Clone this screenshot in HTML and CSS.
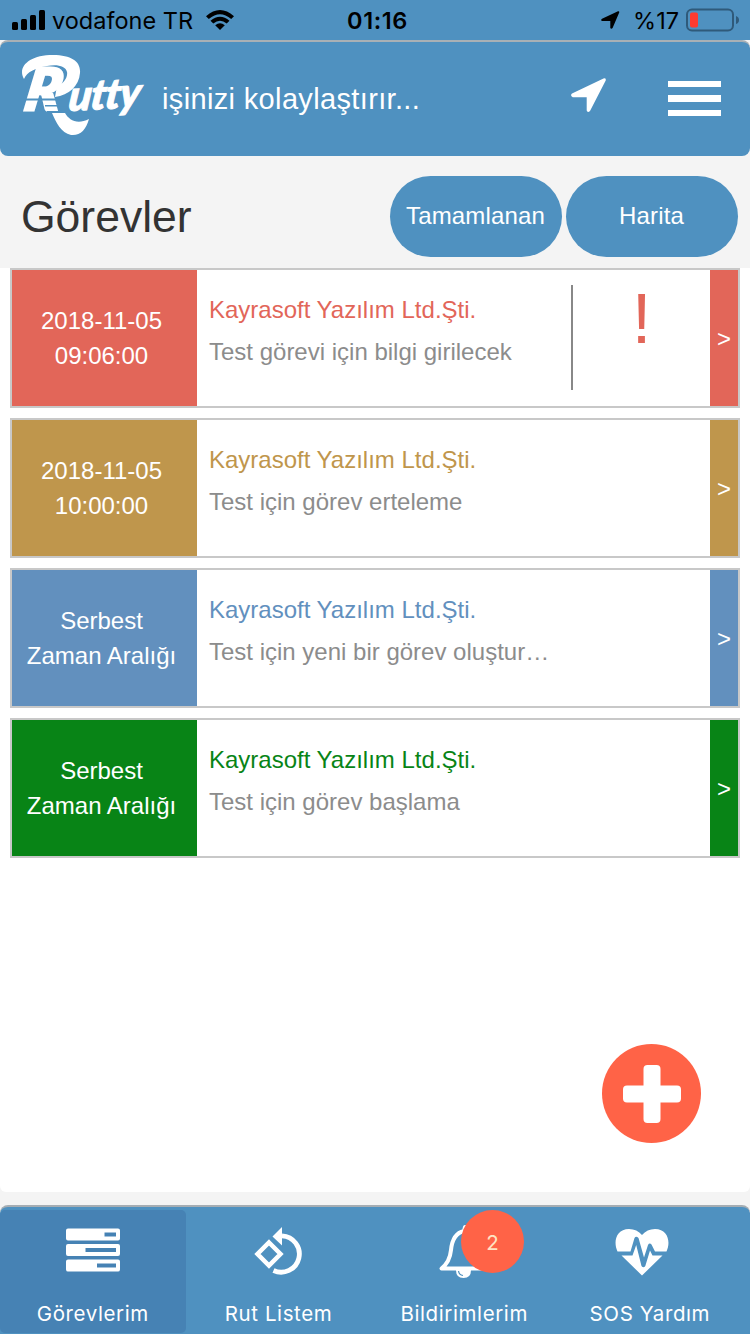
FILE: index.html
```html
<!DOCTYPE html>
<html lang="tr">
<head>
<meta charset="UTF-8">
<meta name="viewport" content="width=device-width, initial-scale=1.0">
<title>Rutty - Görevler</title>
<link rel="stylesheet" href="styles.css">
</head>
<body>

<div class="status">
    <div class="status-left">
        <svg width="34" height="22" viewBox="0 0 34 22">
            <rect x="0" y="13" width="6" height="8" rx="1.5"/>
            <rect x="9" y="10" width="6" height="11" rx="1.5"/>
            <rect x="18" y="6" width="6" height="15" rx="1.5"/>
            <rect x="27" y="1" width="6" height="20" rx="1.5"/>
        </svg>
        <span class="carrier">vodafone TR</span>
        <svg width="28" height="20" viewBox="0 0 28 20">
            <path d="M0 6.200Q14 -6 28 6.200L25.200 9Q14 -.5 2.800 9Z"/>
            <path d="M4.500 10.700Q14 2.700 23.500 10.700L20.700 13.500Q14 8 7.300 13.500Z"/>
            <path d="M9.200 15.300Q14 11.300 18.800 15.300L14 20Z"/>
        </svg>
    </div>
    <div class="clock">01:16</div>
    <div class="status-right">
        <svg width="19" height="18" viewBox="0 0 19 18">
            <path d="M1 7.800L17 .3Q18.600 0 18.200 1.400L11.600 17Q10.200 18.500 9.300 17V10H1Q-.8 9.200 1 7.800Z"/>
        </svg>
        <span class="percent">%17</span>
        <svg width="53" height="24" viewBox="0 0 53 24">
            <rect x="1" y="1.500" width="46" height="21" rx="5" fill="none" stroke="#2f5a7a" stroke-width="2"/>
            <rect x="4" y="4.500" width="8" height="15" rx="2" fill="#ff3b30"/>
            <path d="M50 8Q53 9 53 12T50 16Z" fill="#2f5a7a"/>
        </svg>
    </div>
</div>

<div class="header">
    <div class="logo">
        <span class="logo-r">R</span><span class="logo-rest">utty</span>
        <svg class="swash" width="124" height="84" viewBox="0 0 124 84">
            <path d="M3 24C-4 12 8 0 32 0C51 0 60 7 59 18C58 31 48 40 34 42L36 31C43 29 47 22 46 17C45 11 36 9 26 11C14 13 6 17 3 24Z"/>
            <path d="M31 58H44C48 65 56 70 68 64C65 75 59 81 50 80C40 78 35 67 31 58Z"/>
            <path class="stripe" d="M4 43.500H42V45.500H4ZM24 50H46V51.500H24ZM26 56H48V57.500H26Z"/>
        </svg>
    </div>
    <div class="slogan">işinizi kolaylaştırır...</div>
    <svg class="locate" width="35" height="35" viewBox="0 0 35 35">
        <path d="M1 15.500L32.500 .4Q35.400 0 34.700 2.500L19 33Q16.500 35 15.700 32.500V19.200H1.800Q-1.200 17.500 1 15.500Z"/>
    </svg>
    <div class="menu">
        <span></span>
        <span></span>
        <span></span>
    </div>
</div>

<div class="title">
    <h1>Görevler</h1>
    <button type="button">Tamamlanan</button>
    <button type="button">Harita</button>
</div>

<div class="list">
    <div class="task red">
        <div class="time">2018-11-05<br>09:06:00</div>
        <div class="info">
            <div class="firm">Kayrasoft Yazılım Ltd.Şti.</div>
            <div class="desc">Test görevi için bilgi girilecek</div>
        </div>
        <div class="alert"><span>!</span></div>
        <div class="go">&gt;</div>
    </div>
    <div class="task gold">
        <div class="time">2018-11-05<br>10:00:00</div>
        <div class="info">
            <div class="firm">Kayrasoft Yazılım Ltd.Şti.</div>
            <div class="desc">Test için görev erteleme</div>
        </div>
        <div class="go">&gt;</div>
    </div>
    <div class="task blue">
        <div class="time">Serbest<br>Zaman Aralığı</div>
        <div class="info">
            <div class="firm">Kayrasoft Yazılım Ltd.Şti.</div>
            <div class="desc">Test için yeni bir görev oluştur…</div>
        </div>
        <div class="go">&gt;</div>
    </div>
    <div class="task green">
        <div class="time">Serbest<br>Zaman Aralığı</div>
        <div class="info">
            <div class="firm">Kayrasoft Yazılım Ltd.Şti.</div>
            <div class="desc">Test için görev başlama</div>
        </div>
        <div class="go">&gt;</div>
    </div>
    <button class="add" type="button">
        <svg width="58" height="58" viewBox="0 0 58 58">
            <rect x="20.500" y="0" width="17" height="58" rx="4"/>
            <rect x="0" y="20.500" width="58" height="17" rx="4"/>
        </svg>
    </button>
</div>

<div class="nav">
    <div class="tab active">
        <svg width="54" height="54" viewBox="0 0 54 54">
            <path fill-rule="evenodd" d="M2 4.500H52Q54 4.500 54 6.500V14.500Q54 16.500 52 16.500H2Q0 16.500 0 14.500V6.500Q0 4.500 2 4.500ZM38.500 8.500V12.500H50V8.500Z"/>
            <path fill-rule="evenodd" d="M2 20H52Q54 20 54 22V30Q54 32 52 32H2Q0 32 0 30V22Q0 20 2 20ZM19.500 24V28H50V24Z"/>
            <path fill-rule="evenodd" d="M2 35.500H52Q54 35.500 54 37.500V45.500Q54 47.500 52 47.500H2Q0 47.500 0 45.500V37.500Q0 35.500 2 35.500ZM31 39.500V43.500H50V39.500Z"/>
        </svg>
        <span>Görevlerim</span>
    </div>
    <div class="tab">
        <svg width="54" height="54" viewBox="0 0 54 54">
            <path d="M17 18.500L28.500 30L17 41.500L5.500 30Z" fill="none" stroke="#fff" stroke-width="4.500"/>
            <path d="M30 11.800A18.200 18.200 0 1 1 21.500 46.500" fill="none" stroke="#fff" stroke-width="4.800"/>
            <path d="M20.500 12.500L30 3V21.500Z"/>
        </svg>
        <span>Rut Listem</span>
    </div>
    <div class="tab">
        <svg class="bell" width="54" height="54" viewBox="0 0 54 54">
            <path d="M28 3L27 7C18 9 15 16 14 26C13 36 9 41 4.500 44.500H49C45 41 41 36 40 26C40 16 36 8 27 7" fill="none" stroke="#fff" stroke-width="4" stroke-linecap="round" stroke-linejoin="round"/>
            <path d="M19 46H34Q34 54 26.500 54T19 46Z"/>
            <path d="M21.500 47Q22 51 26 51.500" fill="none" stroke="#4f91c0" stroke-width="1.200"/>
        </svg>
        <span>Bildirimlerim</span>
        <b class="badge">2</b>
    </div>
    <div class="tab">
        <svg class="heart" width="54" height="54" viewBox="0 0 54 54">
            <path d="M2.500 27.500C-2 18 1 5 14 5Q22 5 27 11Q32 5 40 5C53 5 56 18 51.500 27.500H40L36.500 20.500Q34.500 18.500 33 21L29 33.500L23.500 14Q21 11.500 19.500 14L15.500 27.500Z"/>
            <path d="M6.500 31.500H17.500L21.200 21L26.500 42Q28.500 44.500 30.300 42L35 26.500L37.500 31.500H47.500L27 51.500Z"/>
        </svg>
        <span>SOS Yardım</span>
    </div>
</div>

</body>
</html>
```
FILE: styles.css
```css
* {
    box-sizing: border-box;
}
body {
    margin: 0;
    height: 1334px;
    display: flex;
    flex-direction: column;
    font-family: "Liberation Sans", Arial, sans-serif;
    font-size: 24px;
    background-color: #f4f4f4;
    overflow: hidden;
}
svg {
    display: block;
    fill: #fff;
}
button {
    border: none;
    padding: 0;
    color: #fff;
    font: inherit;
}
.status {
    height: 40px;
    flex: none;
    display: grid;
    grid-template-columns: 1fr auto 1fr;
    align-items: center;
    padding: 0 11px 0 12px;
    background-color: #4f91c0;
    color: #000;
    font-family: Inter, sans-serif;
    font-size: 23.5px;
}
.status svg {
    fill: #000;
}
.status-left, .status-right {
    display: flex;
    align-items: center;
}
.status-right {
    justify-content: flex-end;
}
.carrier {
    margin: 0 13px 0 6px;
}
.percent {
    margin: 0 7px 0 13px;
}
.clock {
    font-weight: 600;
    letter-spacing: 0.6px;
    padding-left: 4px;
}
.header {
    height: 116px;
    flex: none;
    display: flex;
    align-items: center;
    padding: 0 29px 0 21px;
    border-top: 2px solid #a9b0b5;
    border-radius: 8px;
    background-color: #4f91c0;
    color: #fff;
}
.logo {
    position: relative;
    width: 124px;
    height: 84px;
    margin-right: 17px;
    margin-top: -4px;
    display: flex;
    font-family: Lato, sans-serif;
    font-weight: 900;
    font-style: italic;
    line-height: 1;
}
.swash {
    position: absolute;
    left: 0;
    top: 0;
}
.stripe {
    fill: #4f91c0;
}
.logo-r {
    width: 42px;
    margin: 4px 0 0 4px;
    font-size: 58px;
    -webkit-text-stroke: 3px #fff;
    transform: skewX(-10deg);
}
.logo-rest {
    margin: 17px 0 0 1px;
    font-size: 42px;
    letter-spacing: -1px;
    -webkit-text-stroke: 1px #fff;
    transform: rotate(-3deg) skewX(-10deg);
}
.slogan {
    flex: 1;
    font-size: 29px;
    letter-spacing: 0.35px;
    padding-top: 1px;
}
.locate {
    margin: -7px 62px 0 0;
}
.menu {
    width: 53px;
    display: flex;
    flex-direction: column;
    gap: 8px;
    margin-top: -1px;
}
.menu span {
    height: 6.500px;
    background-color: #fff;
}
.title {
    height: 112px;
    flex: none;
    display: flex;
    align-items: center;
    gap: 4px;
    padding: 9px 12px 0 21px;
}
.title h1 {
    flex: 1;
    margin: 0;
    font-size: 44.5px;
    font-weight: normal;
    color: #333;
}
.title button {
    width: 172px;
    height: 81px;
    border-radius: 41px;
    background-color: #4f91c0;
    padding: 0 1px 2px 0;
    letter-spacing: 0.15px;
}
.list {
    position: relative;
    height: 924px;
    flex: none;
    display: flex;
    flex-direction: column;
    gap: 10px;
    padding: 0 10px;
    border-radius: 0 0 6px 6px;
    background-color: #fff;
}
.task {
    height: 140px;
    display: flex;
    border: 2px solid #c8c8c8;
}
.time {
    width: 185px;
    display: flex;
    align-items: center;
    justify-content: center;
    text-align: center;
    line-height: 35px;
    padding-right: 6px;
    color: #fff;
}
.info {
    flex: 1;
    padding: 19px 0 0 12px;
    line-height: 42px;
}
.desc {
    color: #8c8c8c;
}
.alert {
    width: 139px;
    height: 105px;
    margin-top: 15px;
    border-left: 2px solid #888;
    text-align: center;
    font-size: 71px;
    line-height: 67px;
}
.go {
    width: 28px;
    line-height: 138px;
    text-align: center;
    color: #fff;
}
.red .time, .red .go {
    background-color: #e26659;
}
.red .firm, .alert {
    color: #e26659;
}
.gold .time, .gold .go {
    background-color: #bf964c;
}
.gold .firm {
    color: #bf964c;
}
.blue .time, .blue .go {
    background-color: #6290be;
}
.blue .firm {
    color: #6290be;
}
.green .time, .green .go {
    background-color: #088416;
}
.green .firm {
    color: #088416;
}
/* floating button over the list */
.add {
    position: absolute;
    right: 49px;
    bottom: 49px;
    width: 99px;
    height: 99px;
    border-radius: 50%;
    display: flex;
    align-items: center;
    justify-content: center;
    background-color: #ff6347;
}
.nav {
    height: 129px;
    flex: none;
    margin-top: 13px;
    display: grid;
    grid-template-columns: repeat(4, 185.700px);
    padding-top: 3px;
    border-top: 2px solid #a5adb3;
    border-radius: 8px 8px 0 0;
    background-color: #4f91c0;
    color: #fff;
    font-family: Inter, sans-serif;
    font-size: 20.5px;
    letter-spacing: 0.6px;
}
.tab {
    position: relative;
    height: 123px;
    display: flex;
    flex-direction: column;
    align-items: center;
    gap: 23px;
    padding-top: 14px;
    border-radius: 5px;
}
.bell {
    overflow: visible;
}
.heart {
    margin-right: 15px;
}
.active {
    background-color: #4682b4;
}
.badge {
    position: absolute;
    left: 90px;
    top: 0;
    width: 63px;
    height: 63px;
    border-radius: 50%;
    background-color: #ff6347;
    color: #ffe4c4;
    font-weight: normal;
    line-height: 65px;
    text-align: center;
}
```
